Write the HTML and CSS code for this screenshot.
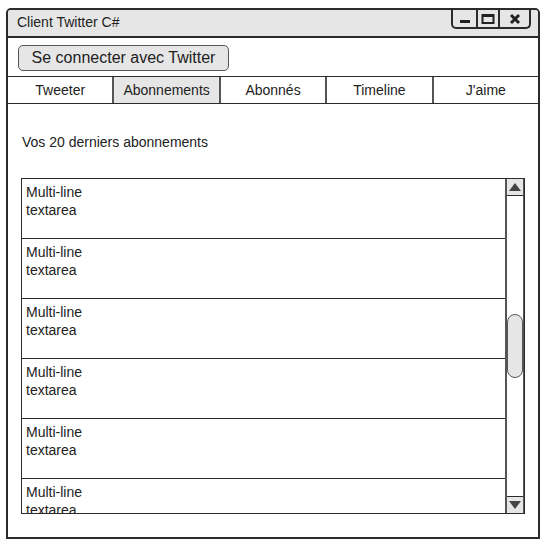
FILE: index.html
```html
<!DOCTYPE html>
<html lang="fr">
<head>
    <meta charset="UTF-8">
    <title>Client Twitter C#</title>
    <link rel="stylesheet" href="styles.css">
</head>
<body>

    <div class="window">
        <div class="titlebar">
            <span class="title">Client Twitter C#</span>
            <div class="win-ctrl">
                <span class="ctrl ctrl-min">
                    <svg width="12" height="10" viewBox="0 0 12 10"><rect x="1" y="6" width="10" height="3" fill="#222"/></svg>
                </span>
                <span class="ctrl ctrl-max">
                    <svg width="14" height="12" viewBox="0 0 14 12"><rect x="1.5" y="2" width="11" height="8" fill="none" stroke="#222" stroke-width="2"/><rect x="1" y="1" width="12" height="3" fill="#222"/></svg>
                </span>
                <span class="ctrl ctrl-close">
                    <svg width="12" height="12" viewBox="0 0 12 12"><path d="M2 2 L10 10 M10 2 L2 10" stroke="#222" stroke-width="3"/></svg>
                </span>
            </div>
        </div>

        <div class="toolbar">
            <button class="btn-login">Se connecter avec Twitter</button>
        </div>

        <div class="tabs">
            <div class="tab">Tweeter</div>
            <div class="tab active">Abonnements</div>
            <div class="tab">Abonnés</div>
            <div class="tab">Timeline</div>
            <div class="tab">J'aime</div>
        </div>

        <div class="panel">
            <p class="label">Vos 20 derniers abonnements</p>

            <div class="list">
                <div class="list-items">
                    <div class="item">Multi-line<br>textarea</div>
                    <div class="item">Multi-line<br>textarea</div>
                    <div class="item">Multi-line<br>textarea</div>
                    <div class="item">Multi-line<br>textarea</div>
                    <div class="item">Multi-line<br>textarea</div>
                    <div class="item">Multi-line<br>textarea</div>
                </div>
                <div class="scrollbar">
                    <div class="sb-btn sb-up"><span class="arrow-up"></span></div>
                    <div class="sb-track">
                        <div class="sb-thumb"></div>
                    </div>
                    <div class="sb-btn sb-down"><span class="arrow-down"></span></div>
                </div>
            </div>
        </div>
    </div>

</body>
</html>
```

FILE: styles.css
```css
/* reset */
* {
    margin: 0;
    padding: 0;
    box-sizing: border-box;
}

body {
    background: #fff;
    color: #222;
    font-family: 'Liberation Sans', Arial, sans-serif;
    font-size: 14px;
}

/* fenetre */
.window {
    margin: 8px 0 0 6px;
    width: 534px;
    height: 531px;
    border: 2px solid #2b2b2b;
    border-radius: 5px 5px 0 0;
    display: flex;
    flex-direction: column;
    overflow: hidden;
}

.titlebar {
    height: 28px;
    flex: none;
    background: #e6e6e6;
    border-bottom: 2px solid #2b2b2b;
    display: flex;
    align-items: flex-start;
    justify-content: space-between;
}

.title {
    padding: 4px 0 0 9px;
    line-height: 16px;
}

.win-ctrl {
    display: flex;
    height: 19px;
    margin-right: 7px;
    border: 2px solid #2b2b2b;
    border-top: none;
    border-radius: 0 0 5px 5px;
}

.ctrl {
    display: flex;
    align-items: center;
    justify-content: center;
}

.ctrl + .ctrl {
    border-left: 2px solid #2b2b2b;
}

.ctrl-min { width: 23px; }
.ctrl-max { width: 22px; }
.ctrl-close { width: 31px; }

/* barre de bouton */
.toolbar {
    height: 38px;
    flex: none;
    padding: 7px 0 0 10px;
}

.btn-login {
    width: 211px;
    height: 26px;
    background: #e6e6e6;
    border: 1px solid #555;
    border-radius: 5px;
    font-family: inherit;
    font-size: 16px;
    color: #222;
}

/* onglets */
.tabs {
    display: flex;
    flex: none;
    height: 28px;
    border-top: 1px solid #2b2b2b;
    border-bottom: 1px solid #2b2b2b;
}

.tab {
    flex: 1;
    text-align: center;
    line-height: 26px;
}

.tab + .tab {
    border-left: 2px solid #555;
}

.tab.active {
    background: #e6e6e6;
}

/* contenu */
.panel {
    padding: 29px 13px 0 13px;
}

.label {
    line-height: 18px;
    margin-bottom: 27px;
    padding-left: 1px;
}

.list {
    height: 336px;
    border: 1px solid #2b2b2b;
    display: flex;
}

.list-items {
    flex: 1;
    overflow: hidden;
}

.item {
    height: 60px;
    padding: 4px 4px;
    line-height: 18px;
    border-bottom: 1px solid #2b2b2b;
}

.scrollbar {
    width: 19px;
    border-left: 2px solid #555;
    border-right: 1px solid #555;
    display: flex;
    flex-direction: column;
}

.sb-btn {
    height: 17px;
    background: #e6e6e6;
    display: flex;
    align-items: center;
    justify-content: center;
}

.sb-up { border-bottom: 1px solid #2b2b2b; }
.sb-down { border-top: 1px solid #2b2b2b; }

.arrow-up {
    border-left: 6px solid transparent;
    border-right: 6px solid transparent;
    border-bottom: 8px solid #444;
}

.arrow-down {
    border-left: 6px solid transparent;
    border-right: 6px solid transparent;
    border-top: 8px solid #444;
}

.sb-track {
    flex: 1;
    padding-top: 118px;
}

.sb-thumb {
    height: 64px;
    background: #e6e6e6;
    border: 1px solid #555;
    border-radius: 8px;
}
```
